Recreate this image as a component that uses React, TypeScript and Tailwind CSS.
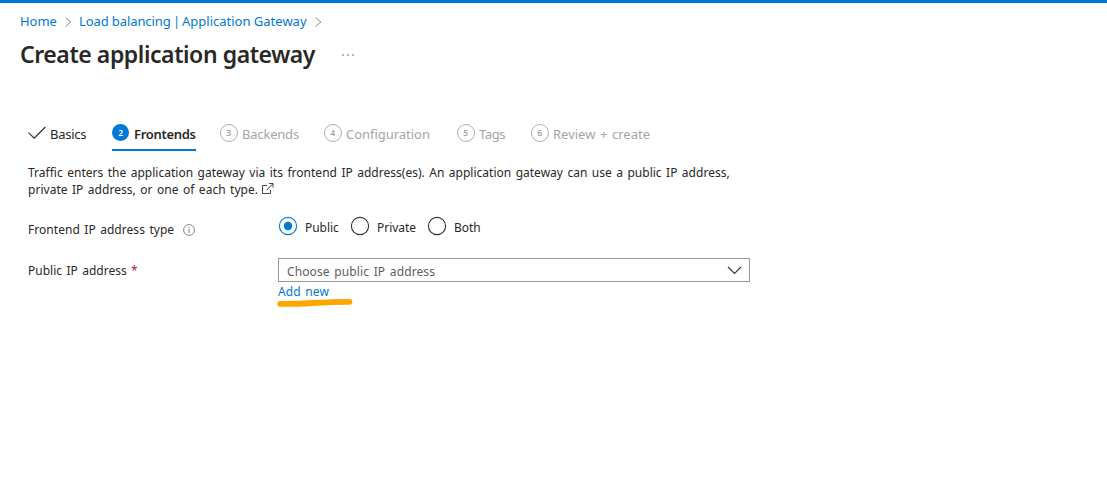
import React from "react";

function Crumb() {
  return (
    <svg className="shrink-0" width="7" height="10" viewBox="0 0 7 10" fill="none" stroke="#8a8886">
      <path d="M.6.6 5.9 5 .6 9.4" />
    </svg>
  );
}

function Step({ n, label, className, text }: { n: number; label: string; className: string; text: string }) {
  return (
    <div className={`flex h-[36px] shrink-0 items-start text-[#a5a5a5] ${className}`}>
      <span className="mt-[9px] flex size-[18px] shrink-0 items-center justify-center rounded-full border border-[#b0b0b0] text-[9.5px] leading-none font-semibold">
        <span className="scale-x-90">{n}</span>
      </span>
      <span className={`ml-1 mt-[9px] leading-5 ${text}`}>{label}</span>
    </div>
  );
}

function Radio({ label, checked = false, className }: { label: string; checked?: boolean; className: string }) {
  return (
    <label className={`flex h-5 shrink-0 items-center ${className}`}>
      <svg className="shrink-0" width="20" height="20" viewBox="0 0 20 20" fill="none">
        <circle cx="10" cy="10" r="8.6" stroke={checked ? "#0078d4" : "#323130"} strokeWidth="1.1" />
        {checked && <circle cx="10" cy="10" r="4.2" fill="#0078d4" />}
      </svg>
      <span className="ml-[7px] mt-[4px] text-[12px] leading-4 tracking-[-0.04px]">{label}</span>
    </label>
  );
}

export default function App() {
  return (
    <main className="h-[478px] w-[1107px] overflow-hidden border-t-[3px] border-[#0078d4] bg-white font-['Noto_Sans','Open_Sans',sans-serif] text-[#292827] whitespace-nowrap">
      <nav className="flex h-[37px] items-center pl-5 text-[13px] text-[#0078d4]">
        <a className="w-[45px] tracking-[-0.05px]">Home</a>
        <Crumb />
        <a className="ml-[7px] flex w-[236px]">
          <span className="w-[94px] tracking-[-0.1px]">Load balancing</span>
          <span className="w-[9px]">|</span>
          <span>Application Gateway</span>
        </a>
        <Crumb />
      </nav>
      <header className="flex h-[30px] items-center pl-5">
        <h1 className="w-[322px] pb-px text-[23px] leading-[29px] font-semibold tracking-[-0.43px]">Create application gateway</h1>
        <svg width="12" height="2" viewBox="0 0 12 2" fill="#605e5c">
          <circle cx="1" cy="1" r=".8" />
          <circle cx="6" cy="1" r=".8" />
          <circle cx="11" cy="1" r=".8" />
        </svg>
      </header>

      <div className="mt-[45px] flex h-[36px] pl-7 text-[13px]">
        <div className="flex w-[84px] items-start">
          <svg className="mt-[11px] shrink-0" width="18" height="14" viewBox="0 0 18 14" fill="none" stroke="#323130" strokeWidth="1.3">
            <path d="M.5 6.6 6.2 12.2 17.4 1" />
          </svg>
          <span className="ml-1 mt-[9px] leading-5 tracking-[-0.25px]">Basics</span>
        </div>
        <div className="flex h-[36px] w-[84px] items-start border-b-2 border-[#0078d4]">
          <span className="mt-[9px] flex size-[17px] shrink-0 items-center justify-center rounded-full bg-[#0078d4] text-[9.5px] leading-none font-semibold text-white">
            <span className="scale-x-90">2</span>
          </span>
          <span className="ml-[5px] mt-[9px] leading-5 font-semibold tracking-[-0.3px]">Frontends</span>
        </div>
        <Step n={3} label="Backends" className="ml-6 w-[104px]" text="tracking-[-0.2px]" />
        <Step n={4} label="Configuration" className="w-[133px]" text="tracking-[-0.03px]" />
        <Step n={5} label="Tags" className="w-[74px]" text="tracking-[-0.4px]" />
        <Step n={6} label="Review + create" className="w-[130px]" text="[word-spacing:1.2px]" />
      </div>

      <section className="pl-7 pt-[13px] text-[12px] [word-spacing:1.3px]">
        <p className="leading-[17px]">
          <span className="block tracking-[0.015px]">Traffic enters the application gateway via its frontend IP address(es). An application gateway can use a public IP address,</span>
          <span className="flex items-start">
            <span className="w-[234px] tracking-[0.03px]">private IP address, or one of each type.</span>
            <svg className="mt-[2px]" width="12" height="12" viewBox="0 0 12 12" fill="none" stroke="#323130">
              <path d="M5 2.5H.5v8h8V7M7 .5h4V4.5M11 .7 4.5 7.2" strokeWidth=".9" />
            </svg>
          </span>
        </p>
        <div className="mt-[18px] flex h-5 items-start">
          <div className="mt-[6px] flex w-[250px] shrink-0 items-center leading-4">
            <span className="w-[155px] tracking-[0.04px]">Frontend IP address type</span>
            <svg width="12" height="12" viewBox="0 0 12 12" fill="none" stroke="#797775">
              <circle cx="6" cy="6" r="5.4" strokeWidth=".9" />
              <path d="M6 5v4M6 3v1" />
            </svg>
          </div>
          <Radio label="Public" checked className="w-[72px]" />
          <Radio label="Private" className="w-[77px]" />
          <Radio label="Both" className="w-[60px]" />
        </div>
        <div className="mt-[22px] flex items-start">
          <div className="mt-[5px] w-[250px] shrink-0 leading-4">
            Public IP address <span className="text-[#a4262c]">*</span>
          </div>
          <div className="w-[472px]">
            <div className="flex h-6 items-center justify-between border border-[#9a9896] pr-[7px] pl-2 text-[#605e5c]">
              <span className="mt-[3px] leading-4 tracking-[0.12px]">Choose public IP address</span>
              <svg width="15" height="9" viewBox="0 0 15 9" fill="none" stroke="#323130" strokeWidth="1.1">
                <path d="m1 1 6.5 6.5L14 1" />
              </svg>
            </div>
            <a className="mt-[2px] block leading-4 tracking-[0.1px] text-[#0078d4]">Add new</a>
            <svg className="-ml-1 -mt-[2px]" width="80" height="10" viewBox="0 0 80 10" fill="none">
              <path d="M6.2 5.8C28 6.6 45 3.7 75.5 3.8" stroke="#ffa500" strokeWidth="5.8" strokeLinecap="round" />
            </svg>
          </div>
        </div>
      </section>
    </main>
  );
}
